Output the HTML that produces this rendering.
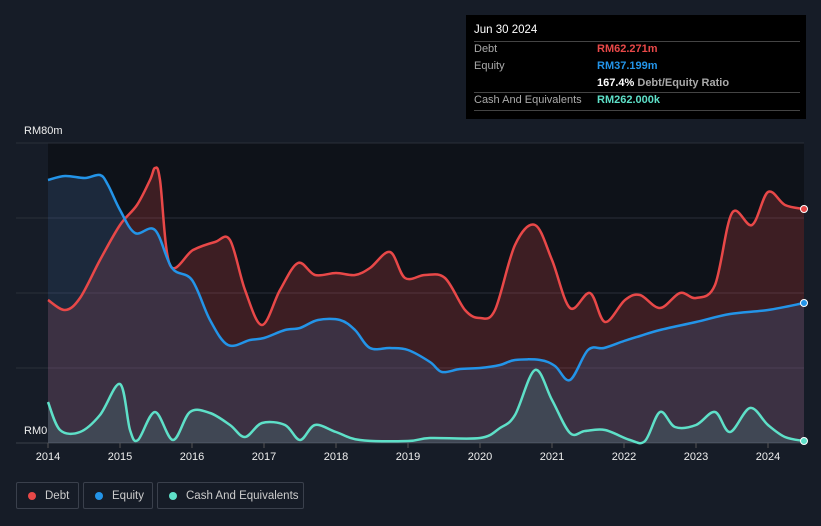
<!DOCTYPE html>
<html><head><meta charset="utf-8"><style>
body{margin:0;width:821px;height:526px;background:#161c27;font-family:"Liberation Sans",sans-serif;overflow:hidden;position:relative}
.tt{position:absolute;left:466px;top:15px;width:340px;height:104px;background:#000;color:#fff;font-size:11px}
.tt .h{position:absolute;left:8px;top:9px;font-size:11.5px}
.row{position:absolute;left:8px;width:326px;height:17px;line-height:17px;color:#aaa}
.row span{position:absolute;left:123px;font-weight:bold}
.ln{position:absolute;left:8px;width:326px;border-top:1px solid #444}
.lbl{position:absolute;color:#eee;font-size:11px}
.leg{position:absolute;top:482px;height:27px;border:1px solid #3a404c;border-radius:2px;color:#ccc;font-size:11.5px;line-height:27px;box-sizing:border-box}
.leg i{position:absolute;left:11px;top:9px;width:8px;height:8px;border-radius:50%}
</style></head><body>
<div class="tt">
<div class="h">Jun 30 2024</div>
<div class="ln" style="top:26px"></div>
<div class="row" style="top:26px">Debt<span style="color:#e84848">RM62.271m</span></div>
<div class="row" style="top:43px">Equity<span style="color:#2394e8">RM37.199m</span></div>
<div class="row" style="top:60px"><span style="color:#fff">167.4% <b style="color:#aaa">Debt/Equity Ratio</b></span></div>
<div class="ln" style="top:77px"></div>
<div class="row" style="top:77px">Cash And Equivalents<span style="color:#5ee0c8">RM262.000k</span></div>
<div class="ln" style="top:95px"></div>
</div>
<div class="lbl" style="left:24px;top:125px">RM80m</div>
<div class="lbl" style="left:24px;top:425px">RM0</div>
<svg id="s" width="821" height="526" style="position:absolute;left:0;top:0"></svg>
<div class="leg" style="left:16px;width:63px"><i style="background:#e84848"></i><span style="position:absolute;left:28px">Debt</span></div>
<div class="leg" style="left:83px;width:70px"><i style="background:#2394e8"></i><span style="position:absolute;left:28px">Equity</span></div>
<div class="leg" style="left:157px;width:147px"><i style="background:#5ee0c8"></i><span style="position:absolute;left:28px">Cash And Equivalents</span></div>
<script>
var D=[[48,300],[65,310],[80,298],[100,260],[120,225],[137,205],[150,180],[155,168],[160,180],[170,265],[193,250],[215,242],[230,240],[245,290],[262,325],[280,290],[298,263],[315,275],[336,273],[355,275],[370,268],[390,252],[405,278],[425,275],[445,278],[465,310],[480,318],[495,310],[515,245],[535,225],[552,260],[570,308],[590,293],[605,322],[625,300],[640,295],[660,308],[680,293],[696,298],[715,285],[732,213],[752,225],[768,192],[785,205],[804,209]];
var E=[[48,180],[65,176],[85,178],[100,175],[108,185],[120,210],[135,233],[155,230],[172,268],[192,280],[210,320],[228,345],[250,340],[264,338],[285,330],[300,328],[318,320],[340,320],[355,330],[370,348],[390,348],[408,350],[430,362],[442,372],[460,369],[480,368],[500,365],[515,360],[540,360],[555,366],[570,380],[588,350],[604,348],[624,341],[640,336],[660,330],[696,322],[730,314],[768,310],[804,303]];
var C=[[48,402],[60,430],[80,432],[100,415],[120,384],[130,430],[138,440],[155,412],[173,440],[190,412],[210,413],[230,425],[245,437],[262,423],[285,425],[300,440],[315,425],[336,432],[360,440],[408,441],[430,438],[480,438],[500,428],[515,415],[535,370],[552,400],[570,433],[585,431],[605,430],[630,440],[645,441],[660,412],[675,427],[696,425],[715,412],[730,432],[750,408],[768,425],[785,437],[804,441]];
function sm(p){var d="M"+p[0];for(var i=0;i<p.length-1;i++){var a=p[i-1]||p[i],b=p[i],c=p[i+1],e=p[i+2]||c;d+="C"+(b[0]+(c[0]-a[0])/6)+","+(b[1]+(c[1]-a[1])/6)+" "+(c[0]-(e[0]-b[0])/6)+","+(c[1]-(e[1]-b[1])/6)+" "+c[0]+","+c[1];}return d;}
var h='<rect x="48" y="143" width="756" height="300" fill="#0e1219"/>';
[143,218,293,368].forEach(function(y){h+='<line x1="16" x2="804" y1="'+y+'" y2="'+y+'" stroke="#2a2f39"/>';});
h+='<line x1="16" x2="804" y1="443" y2="443" stroke="#3a3f4a"/>';
h+='<path d="'+sm(D)+'L804,443L48,443Z" fill="#e84848" fill-opacity="0.22"/>';
h+='<path d="'+sm(E)+'L804,443L48,443Z" fill="#3c5a88" fill-opacity="0.32"/>';
h+='<path d="'+sm(C)+'L804,443L48,443Z" fill="#5ee0c8" fill-opacity="0.13"/>';
h+='<path d="'+sm(D)+'" fill="none" stroke="#e84848" stroke-width="2.5"/>';
h+='<path d="'+sm(E)+'" fill="none" stroke="#2394e8" stroke-width="2.5"/>';
h+='<path d="'+sm(C)+'" fill="none" stroke="#5ee0c8" stroke-width="2.5"/>';
h+='<circle cx="804" cy="209" r="3.5" fill="#e84848" stroke="#fff"/><circle cx="804" cy="303" r="3.5" fill="#2394e8" stroke="#fff"/><circle cx="804" cy="441" r="3.5" fill="#5ee0c8" stroke="#fff"/>';
for(var y=2014;y<=2024;y++){var x=48+(y-2014)*72;h+='<line x1="'+x+'" x2="'+x+'" y1="443" y2="448" stroke="#555"/><text x="'+x+'" y="460" fill="#eee" font-size="11" text-anchor="middle" font-family="Liberation Sans">'+y+'</text>';}
document.getElementById('s').innerHTML=h;
</script>
</body></html>
